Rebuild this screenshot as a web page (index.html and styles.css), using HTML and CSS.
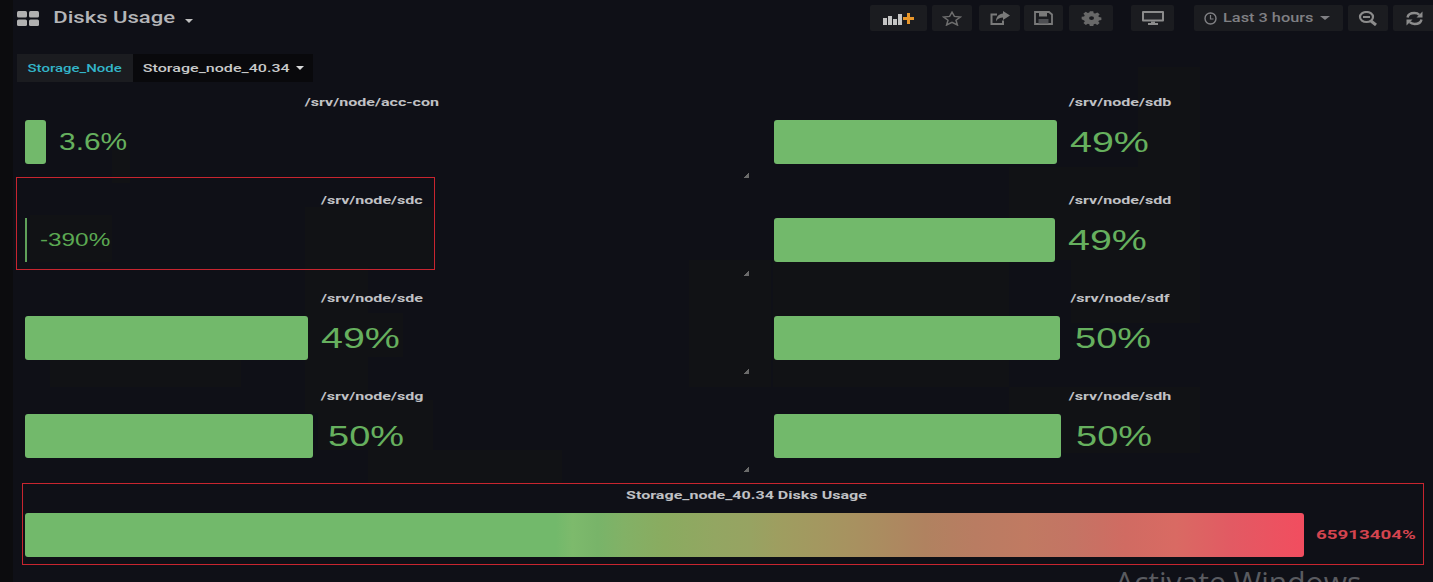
FILE: index.html
```html
<!DOCTYPE html>
<html lang="en">
<head>
<meta charset="utf-8">
<title>Disks Usage</title>
<link rel="stylesheet" href="styles.css">
</head>
<body>
<header class="navbar">
  <div class="brand">
    <svg class="grid-icon" width="22" height="15" viewBox="0 0 22 15"><rect x="0" y="0" width="10" height="6.500" rx="1.500"/><rect x="12" y="0" width="10" height="6.500" rx="1.500"/><rect x="0" y="8.500" width="10" height="6.500" rx="1.500"/><rect x="12" y="8.500" width="10" height="6.500" rx="1.500"/></svg>
    <span class="dash-title"><span class="wide">Disks Usage</span></span>
    <span class="caret-small"></span>
  </div>
  <nav class="toolbar">
    <button class="btn btn-add"><svg width="32" height="13" viewBox="0 0 32 13"><g fill="#c4c4c4"><rect x="0" y="6" width="4" height="7"/><rect x="5" y="4" width="4" height="9"/><rect x="10" y="7" width="4" height="6"/><rect x="15" y="2" width="4" height="11"/></g><path d="M24 1h3v4h4v3h-4v4h-3V8h-4V5h4z" fill="#e8962a"/></svg></button>
    <button class="btn btn-star"><svg width="20" height="15" viewBox="0 0 20 15"><polygon points="10,1.200 12.400,5.400 18.400,6 14,9.200 15.400,14 10,11.400 4.600,14 6,9.200 1.600,6 7.600,5.400" fill="none" stroke="#6e6e6e" stroke-width="1.500"/></svg></button>
    <button class="btn btn-share"><svg width="20" height="14" viewBox="0 0 20 14"><path d="M13 9.500V13H1.500V3.500H7" fill="none" stroke="#7a7a7a" stroke-width="2"/><path d="M13 0l7 4.500L13 9V6.500C10 6.500 7.500 7.500 6 10.500 6 5.500 9 3 13 2.500z" fill="#7a7a7a"/></svg></button>
    <button class="btn btn-save"><svg width="19" height="14" viewBox="0 0 19 14"><path d="M1 1h14l3 2.500V13H1z" fill="none" stroke="#7a7a7a" stroke-width="1.800"/><rect x="5" y="1.500" width="8" height="4" fill="#7a7a7a"/><rect x="4.500" y="8" width="10" height="4.500" fill="#4e4f53"/></svg></button>
    <button class="btn btn-gear"><svg width="21" height="16" viewBox="0 0 18 18" preserveAspectRatio="none"><path fill="#686868" fill-rule="evenodd" d="M7.300 0h3.400l.5 2.500 1.500.6 2.100-1.400 2.400 2.400-1.400 2.100.6 1.500 2.500.5v3.400l-2.500.5-.6 1.500 1.400 2.100-2.400 2.400-2.100-1.400-1.500.6-.5 2.500H7.300l-.5-2.500-1.500-.6-2.100 1.400-2.400-2.400 1.400-2.100-.6-1.500L-1 10.700V7.300l2.500-.5.6-1.500L.7 3.200 3.100.8l2.100 1.400 1.500-.6zM9 6.500a2.500 2.500 0 1 0 0 5 2.500 2.500 0 0 0 0-5z" transform="translate(1.400 1.400) scale(.85)"/></svg></button>
    <button class="btn btn-tv"><svg width="22" height="14" viewBox="0 0 22 14"><path d="M1 0h20a1 1 0 0 1 1 1v8.500a1 1 0 0 1-1 1H1a1 1 0 0 1-1-1V1a1 1 0 0 1 1-1z" fill="#8c8c8c"/><path d="M2 2h18v6.500H2z" fill="#26272b"/><rect x="9" y="10.500" width="4" height="2" fill="#8c8c8c"/><rect x="6" y="12" width="10" height="2" fill="#8c8c8c"/></svg></button>
    <button class="btn btn-time">
      <svg width="13" height="13" viewBox="0 0 13 13"><circle cx="6.500" cy="6.500" r="5.500" fill="none" stroke="#808084" stroke-width="1.400"/><path d="M6.500 3v4H9.500" fill="none" stroke="#808084" stroke-width="1.200"/></svg>
      <span class="time-label"><span class="wide">Last 3 hours</span></span>
      <span class="caret"></span>
    </button>
    <button class="btn btn-zoom"><svg width="20" height="15" viewBox="0 0 20 15"><ellipse cx="8.500" cy="6" rx="6.500" ry="5" fill="none" stroke="#8c8c8c" stroke-width="2.200"/><path d="M5 5h7v2H5z" fill="#8c8c8c"/><path d="M13 10l5 4" stroke="#8c8c8c" stroke-width="3"/></svg></button>
    <button class="btn btn-refresh"><svg width="19" height="15" viewBox="0 0 19 15"><path d="M2.500 6.500C3 3.500 5.500 2 9.500 2c2 0 3.600.6 4.800 1.800" fill="none" stroke="#8c8c8c" stroke-width="2.400"/><path d="M17.500 0.500v6h-6z" fill="#8c8c8c"/><path d="M16.500 8.500c-.5 3-3 4.500-7 4.500-2 0-3.600-.6-4.800-1.800" fill="none" stroke="#8c8c8c" stroke-width="2.400"/><path d="M1.500 14.500v-6h6z" fill="#8c8c8c"/></svg></button>
  </nav>
</header>

<section class="submenu">
  <span class="var-label"><span class="wide">Storage_Node</span></span>
  <span class="var-value"><span class="wide">Storage_node_40.34</span><span class="caret caret-var"></span></span>
</section>

<main class="panels">
  <article class="panel">
    <h2 class="panel-title"><span class="wide">/srv/node/acc-con</span></h2>
    <div class="gauge"><div class="bar" style="width:21px"></div><span class="value value-mid"><span class="wide">3.6%</span></span></div>
    <i class="resize"></i>
  </article>
  <article class="panel">
    <h2 class="panel-title"><span class="wide">/srv/node/sdb</span></h2>
    <div class="gauge"><div class="bar" style="width:283px"></div><span class="value"><span class="wide">49%</span></span></div>
  </article>
  <article class="panel">
    <h2 class="panel-title"><span class="wide">/srv/node/sdc</span></h2>
    <div class="gauge"><div class="bar bar-thin" style="width:2px"></div><span class="value value-small"><span class="wide">-390%</span></span></div>
    <i class="resize"></i>
  </article>
  <article class="panel">
    <h2 class="panel-title"><span class="wide">/srv/node/sdd</span></h2>
    <div class="gauge"><div class="bar" style="width:281px"></div><span class="value"><span class="wide">49%</span></span></div>
  </article>
  <article class="panel">
    <h2 class="panel-title"><span class="wide">/srv/node/sde</span></h2>
    <div class="gauge"><div class="bar" style="width:283px"></div><span class="value"><span class="wide">49%</span></span></div>
    <i class="resize"></i>
  </article>
  <article class="panel">
    <h2 class="panel-title"><span class="wide">/srv/node/sdf</span></h2>
    <div class="gauge"><div class="bar" style="width:286px"></div><span class="value value-half"><span class="wide">50%</span></span></div>
  </article>
  <article class="panel">
    <h2 class="panel-title"><span class="wide">/srv/node/sdg</span></h2>
    <div class="gauge"><div class="bar" style="width:288px"></div><span class="value value-half"><span class="wide">50%</span></span></div>
    <i class="resize"></i>
  </article>
  <article class="panel">
    <h2 class="panel-title"><span class="wide">/srv/node/sdh</span></h2>
    <div class="gauge"><div class="bar" style="width:287px"></div><span class="value value-half"><span class="wide">50%</span></span></div>
  </article>
</main>

<section class="total">
  <h2 class="panel-title"><span class="wide">Storage_node_40.34 Disks Usage</span></h2>
  <div class="gauge"><div class="bar bar-total"></div><span class="value value-red"><span class="wide">65913404%</span></span></div>
</section>

<div class="mark mark-sdc"></div>
<div class="mark mark-total"></div>
<div class="watermark">Activate Windows</div>
</body>
</html>
```
FILE: styles.css
```css
* { box-sizing: border-box; }
html, body { margin: 0; height: 582px; overflow: hidden; }
body {
  --patch: linear-gradient(#111215, #111215);
  position: relative;
  width: 1433px;
  background-color: #0f1017;
  background-image:
    linear-gradient(#0c0c0e, #0c0c0e),
    var(--patch), var(--patch), var(--patch), var(--patch), var(--patch),
    var(--patch), var(--patch), var(--patch), var(--patch),
    var(--patch), var(--patch), var(--patch), var(--patch), var(--patch);
  background-repeat: no-repeat;
  background-size:
    13px 582px,
    18px 33px, 82px 47px, 128px 60px, 63px 146px, 191px 27px,
    92px 44px, 115px 50px, 194px 33px, 82px 127px,
    62px 256px, 129px 156px, 64px 93px, 236px 127px, 191px 66px;
  background-position:
    0 0,
    112px 150px, 30px 215px, 305px 207px, 305px 267px, 50px 360px,
    311px 313px, 318px 400px, 368px 450px, 689px 260px,
    1138px 67px, 1071px 167px, 1009px 167px, 773px 260px, 1009px 387px;
  font-family: Roboto, "Liberation Sans", sans-serif;
  color: #d8d9da;
}
.wide { display: inline-block; transform: scaleX(var(--sx, 1.38)); white-space: nowrap; }

.navbar { display: flex; align-items: flex-start; justify-content: space-between; height: 36px; }
.brand { display: flex; align-items: center; padding: 10px 0 0 17px; }
.grid-icon { fill: #b0b0b0; display: block; }
.dash-title { margin-left: 14px; width: 122px; font-size: 16px; line-height: 16px; font-weight: 500; color: #b4b5b8; text-align: center; }
.caret-small { margin: 5px 0 0 10px; border: 4px solid transparent; border-top-color: #c0c0c0; border-bottom: 0; }
.toolbar { display: flex; padding-top: 5px; margin-right: -5px; }
.btn { display: flex; align-items: center; justify-content: center; height: 26px; padding: 0; border: 0; border-radius: 2px; background: #1b1c20; font: inherit; }
.btn-add { width: 57px; margin-right: 5px; }
.btn-star { width: 40px; margin-right: 7px; }
.btn-share { width: 41px; margin-right: 4px; }
.btn-save { width: 39px; margin-right: 6px; }
.btn-gear { width: 44px; margin-right: 18px; }
.btn-tv { width: 43px; margin-right: 20px; }
.btn-time { width: 149px; margin-right: 5px; justify-content: flex-start; padding-left: 10px; }
.btn-zoom { width: 40px; margin-right: 5px; }
.btn-refresh { width: 45px; padding-right: 3px; }
.time-label { --sx: 1.36; width: 86px; margin-left: 8px; font-size: 12px; font-weight: 500; color: #808084; text-align: center; }
.caret { margin-left: 9px; border: 4px solid transparent; border-top-color: #808084; border-bottom: 0; border-left-width: 5px; border-right-width: 5px; }

.submenu { display: flex; height: 28px; margin: 18px 0 0 17px; font-size: 11px; font-weight: 500; }
.var-label { --sx: 1.36; display: flex; align-items: center; justify-content: center; width: 116px; background: #1b1c20; color: #33b5c9; }
.var-value { --sx: 1.46; display: flex; align-items: center; width: 180px; padding-left: 33px; background: #09090c; color: #c8c9ca; }
.caret-var { margin-left: 29px; border-top-color: #d8d9da; border-left-width: 4px; border-right-width: 4px; }

.panels { display: grid; grid-template-columns: 710px 708px; grid-auto-rows: 98px; column-gap: 39px; margin-left: 17px; }
.panel { position: relative; padding-top: 13px; }
.panel .gauge { padding-left: 8px; }
.panel-title { --sx: 1.46; height: 16px; margin: 0; font-size: 11px; line-height: 16px; font-weight: 700; color: #c0c1c4; text-align: center; }
.gauge { display: flex; align-items: center; height: 44px; margin-top: 9px; }
.bar { height: 44px; flex: none; background: #72b96b; border-radius: 3px; }
.bar-thin { border-radius: 0; background: #5fa05a; }
.value { --sx: 1.36; margin-left: 13px; font-family: "Liberation Sans", Arial, sans-serif; font-size: 29px; line-height: 44px; color: #66b05e; }
.value .wide { transform-origin: left center; }
.value-half { --sx: 1.31; margin-left: 15px; }
.value-mid { --sx: 1.3; font-size: 23px; }
.value-small { --sx: 1.35; font-size: 18px; color: #5ba852; }
.resize { position: absolute; right: -22px; top: 91px; width: 6px; height: 5px; background: linear-gradient(135deg, transparent 50%, #6a6a6a 50%); }

.total { width: 1442px; margin: 0 0 0 25px; padding-top: 14px; }
.bar-total {
  width: 1279px;
  background: linear-gradient(90deg,
    #72b96b 0, #72b96b 41.5%, #7dba6c 42.8%, #78b469 44.8%, #82b166 46.8%,
    #8aab60 50%, #93a662 54%, #97a362 56.7%, #9e9e60 58.8%,
    #a49760 62.4%, #aa8d60 66.5%, #b08260 70.4%, #b97c62 74.3%,
    #c07a62 78.2%, #c47464 82%, #d06b62 86%, #d96a63 90%,
    #e25a63 94.3%, #f24d5f 100%);
}
.value-red { --sx: 1.44; margin-left: 12px; font-family: Roboto, "Liberation Sans", sans-serif; font-size: 13px; font-weight: 700; color: #d4444f; }

.mark { position: absolute; border: 1px solid #c8252f; pointer-events: none; }
.mark-sdc { left: 16px; top: 177px; width: 419px; height: 93px; }
.mark-total { left: 22px; top: 483px; width: 1402px; height: 82px; }
.watermark { position: absolute; left: 1115px; top: 567px; font-family: "Open Sans", sans-serif; font-size: 30px; line-height: 30px; color: #5a5b60; white-space: nowrap; }
```
